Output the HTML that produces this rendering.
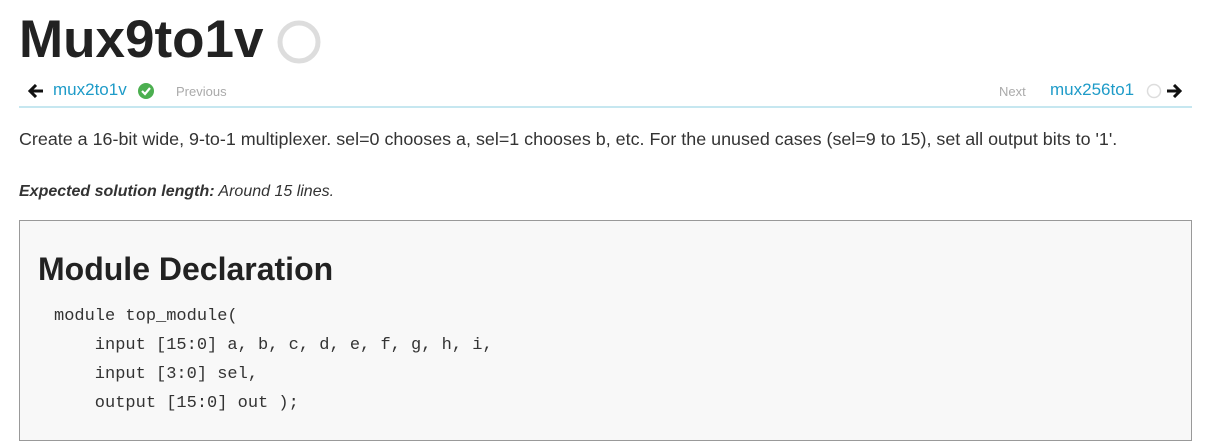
<!DOCTYPE html>
<html><head><meta charset="utf-8"><style>
body{margin:0;background:#fff;font-family:"Liberation Sans",sans-serif;color:#222;width:1213px;height:443px;overflow:hidden;position:relative}
.a{position:absolute;white-space:nowrap}
h1{position:absolute;left:19px;top:8px;margin:0;font-size:53px;font-weight:bold;color:#222;line-height:64px;letter-spacing:0}
.nav{font-size:17px;color:#1e9bc8}
.muted{color:#aaa;font-size:13px}
pre.code{margin:0;font-family:"Liberation Mono",monospace;font-size:17px;color:#333;line-height:29px;white-space:pre}
</style></head><body>
<h1>Mux9to1v</h1>
<svg class="a" style="left:276px;top:19px" width="46" height="46"><circle cx="23" cy="23" r="19" fill="none" stroke="#ddd" stroke-width="5"/></svg>
<svg class="a" style="left:28px;top:84px" width="16" height="14"><path d="M8 1 L2 7 L8 13 M2 7 H15" stroke="#111" stroke-width="3" fill="none"/></svg>
<div class="a nav" style="left:53px;top:80px">mux2to1v</div>
<svg class="a" style="left:138px;top:83px" width="16" height="16"><circle cx="8" cy="8" r="8" fill="#4caf50"/><path d="M4 8 L7 11 L12 5" stroke="#fff" stroke-width="2.2" fill="none"/></svg>
<div class="a muted" style="left:176px;top:84px">Previous</div>
<div class="a muted" style="left:999px;top:84px">Next</div>
<div class="a nav" style="left:1050px;top:80px">mux256to1</div>
<svg class="a" style="left:1146px;top:83px" width="16" height="16"><circle cx="8" cy="8" r="6.5" fill="none" stroke="#ddd" stroke-width="1.5"/></svg>
<svg class="a" style="left:1166px;top:84px" width="16" height="14"><path d="M8 1 L14 7 L8 13 M14 7 H1" stroke="#111" stroke-width="3" fill="none"/></svg>
<div class="a" style="left:19px;top:106px;width:1173px;height:2px;background:#c6e7f0"></div>
<div class="a" style="left:19px;top:129px;font-size:17.9px;color:#333">Create a 16-bit wide, 9-to-1 multiplexer. sel=0 chooses a, sel=1 chooses b, etc. For the unused cases (sel=9 to 15), set all output bits to '1'.</div>
<div class="a" style="left:19px;top:183px;font-size:16px;color:#333;font-style:italic"><b>Expected solution length:</b> Around 15 lines.</div>
<div class="a" style="left:19px;top:220px;width:1171px;height:219px;background:#f8f8f8;border:1px solid #999"></div>
<div class="a" style="left:38px;top:251px;font-size:32px;font-weight:bold;color:#222">Module Declaration</div>
<pre class="code" style="position:absolute;left:54px;top:302px">module top_module(
    input [15:0] a, b, c, d, e, f, g, h, i,
    input [3:0] sel,
    output [15:0] out );</pre>
</body></html>
